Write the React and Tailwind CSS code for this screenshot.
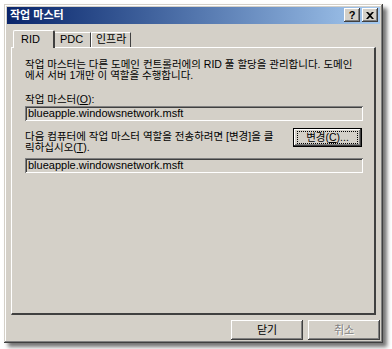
import React from "react";

const font = { fontFamily: '"Liberation Sans", "Noto Sans CJK KR", sans-serif' };

// raised 3d edges, windows 2000 style
const raised =
  "shadow-[inset_-1px_-1px_#404040,inset_1px_1px_#ffffff,inset_-2px_-2px_#808080,inset_2px_2px_#d4d0c8]";
const sunken =
  "shadow-[inset_1px_1px_#808080,inset_-1px_-1px_#ffffff,inset_2px_2px_#404040,inset_-2px_-2px_#d4d0c8]";

function TitleButton({ children }) {
  return (
    <div
      className={`w-[16px] h-[14px] bg-[#d4d0c8] flex items-center justify-center text-[11px] font-bold leading-none text-black ${raised}`}
    >
      {children}
    </div>
  );
}

function Field({ value }) {
  return (
    <div className={`h-[15px] w-[338px] bg-[#d4d0c8] flex items-center px-[3px] text-[11px] leading-none ${sunken}`}>
      {value}
    </div>
  );
}

export default function App() {
  return (
    <div className="w-[392px] h-[349px] bg-white pt-[4px] pl-[4px] text-black" style={font}>
      <div className="w-[379px] h-[339px] bg-[#d4d0c8] p-[3px] flex flex-col shadow-[inset_-1px_-1px_#404040,inset_1px_1px_#d4d0c8,inset_-2px_-2px_#808080,inset_2px_2px_#ffffff,4px_4px_4px_rgba(0,0,0,0.55)]">
        {/* title bar */}
        <div className="h-[17px] flex items-center justify-between pl-[3px] pr-[2px] bg-gradient-to-r from-[#0a246a] to-[#a6caf0]">
          <span className="text-white text-[11px] font-bold leading-none">작업 마스터</span>
          <div className="flex gap-[2px]">
            <TitleButton>?</TitleButton>
            <TitleButton>
              <svg width="8" height="7" viewBox="0 0 8 7">
                <path d="M0 0h2l2 2 2-2h2L5 3.5 8 7H6L4 5 2 7H0l3-3.5z" fill="#000" />
              </svg>
            </TitleButton>
          </div>
        </div>

        {/* tabs */}
        <div className="flex items-end h-[22px] pl-[6px] mt-[1px] text-[11px] leading-none">
          <div className="relative z-10 h-[18px] w-[42px] bg-[#d4d0c8] border-t border-l border-white border-r-2 border-r-[#404040] rounded-t-[2px] flex items-center pl-[7px] -mb-[1px]">
            RID
          </div>
          <div className="h-[15px] w-[36px] border-t border-white border-r border-r-[#404040] flex items-center pl-[5px]">
            PDC
          </div>
          <div className="h-[15px] w-[40px] border-t border-l border-white border-r border-r-[#404040] flex items-center pl-[4px]">
            인프라
          </div>
        </div>

        {/* tab panel */}
        <div className="mx-[4px] h-[270px] border-t border-l border-white border-r-2 border-b-2 border-r-[#404040] border-b-[#404040] pl-[13px] pt-[11px] text-[10.5px] leading-[11px]">
          <p>
            작업 마스터는 다른 도메인 컨트롤러에의 RID 풀 할당을 관리합니다. 도메인
            <br />
            에서 서버 1개만 이 역할을 수행합니다.
          </p>

          <p className="mt-[13px] mb-[1px]">
            작업 마스터(<span className="underline">O</span>):
          </p>
          <Field value="blueapple.windowsnetwork.msft" />

          <div className="flex items-start justify-between w-[337px] mt-[10px]">
            <p>
              다음 컴퓨터에 작업 마스터 역할을 전송하려면 [변경]을 클
              <br />
              릭하십시오(<span className="underline">T</span>).
            </p>
            <div className="-mt-[3px] w-[69px] h-[19px] border border-black bg-[#d4d0c8] flex">
              <div className={`flex-1 flex px-[3px] py-[2px] ${raised}`}>
                <div className="flex-1 flex items-center justify-center border border-dotted border-black text-[10.5px] leading-none">
                  <span>
                    변경(<span className="underline">C</span>)...
                  </span>
                </div>
              </div>
            </div>
          </div>

          <div className="mt-[5px]">
            <Field value="blueapple.windowsnetwork.msft" />
          </div>
        </div>

        {/* bottom buttons */}
        <div className="flex justify-end gap-[5px] mt-[5px] text-[11px]">
          <div className={`w-[72px] h-[20px] flex items-center justify-center ${raised}`}>닫기</div>
          <div
            className={`w-[72px] h-[20px] flex items-center justify-center text-[#808080] [text-shadow:1px_1px_#ffffff] ${raised}`}
          >
            취소
          </div>
        </div>
      </div>
    </div>
  );
}
